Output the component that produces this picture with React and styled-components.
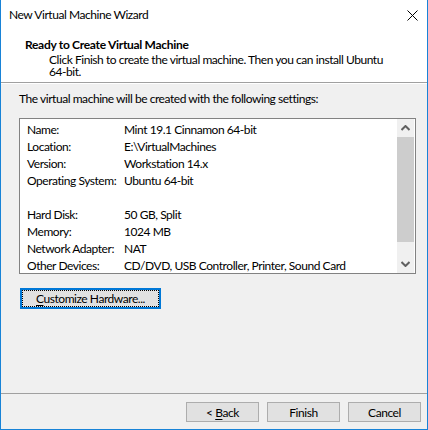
import React from "react";
import styled, { createGlobalStyle } from "styled-components";

const Global = createGlobalStyle`
  html, body { margin: 0; padding: 0; background: #ffffff; }
  body { font-family: Lato, "Noto Sans", sans-serif; font-size: 12px; letter-spacing: -0.45px; color: #000; }
  * { box-sizing: border-box; }
`;

const Window = styled.div`
  width: 428px;
  height: 430px;
  display: flex;
  flex-direction: column;
  border: 1px solid #1883d7;
  border-top: none;
  background: #f0f0f0;
  overflow: hidden;
`;

const TitleBar = styled.div`
  height: 30px;
  flex: none;
  display: flex;
  align-items: center;
  justify-content: space-between;
  background: #fff;
  padding-left: 8px;
  padding-right: 9px;
`;

const Title = styled.span`
  font-size: 12px;
  line-height: 30px;
  color: #000;
`;

const Header = styled.div`
  height: 53px;
  flex: none;
  background: #fff;
  padding: 7px 0 0 24px;
  border-bottom: 1px solid #a0a0a0;
`;

const Heading = styled.div`
  font-weight: 700;
  font-size: 12px;
  line-height: 15px;
  letter-spacing: -0.3px;
`;

const Subtitle = styled.div`
  margin-left: 24px;
  margin-top: 2px;
  font-size: 12px;
  line-height: 12px;
  width: 345px;
`;

const Body = styled.div`
  flex: 1;
  display: flex;
  flex-direction: column;
  padding: 7px 11px 0 18px;
  border-top: 1px solid #fff;
`;

const Intro = styled.div`
  line-height: 15px;
  margin-bottom: 12px;
`;

const ListBox = styled.div`
  height: 156px;
  display: flex;
  border: 1px solid #828282;
  background: #fff;
`;

const Rows = styled.div`
  flex: 1;
  padding: 2px 0 0 7px;
  overflow: hidden;
`;

const Row = styled.div`
  height: 17px;
  display: flex;
  align-items: center;
  white-space: nowrap;
`;

const Label = styled.span`
  width: 97px;
  flex: none;
`;

const Value = styled.span``;

const ScrollBar = styled.div`
  width: 17px;
  flex: none;
  display: flex;
  flex-direction: column;
  background: #f0f0f0;
  margin-right: 1px;
`;

const Arrow = styled.div`
  height: 18px;
  flex: none;
  display: flex;
  align-items: center;
  justify-content: center;
`;

const Track = styled.div`
  flex: 1;
  display: flex;
  flex-direction: column;
`;

const Thumb = styled.div`
  height: 105px;
  background: #cdcdcd;
`;

const CustomizeButton = styled.button`
  align-self: flex-start;
  margin-top: 14px;
  margin-left: 1px;
  width: 141px;
  height: 21px;
  padding: 0;
  font: inherit;
  letter-spacing: inherit;
  font-size: 12px;
  color: #000;
  background: #e1e1e1;
  border: 2px solid #0078d7;
  display: flex;
  align-items: stretch;
`;

const FocusRect = styled.span`
  flex: 1;
  display: flex;
  align-items: center;
  justify-content: center;
  border: 1px dotted #000;
  line-height: 13px;
`;

const Footer = styled.div`
  height: 36px;
  flex: none;
  border-top: 1px solid #a0a0a0;
  display: flex;
  justify-content: flex-end;
  gap: 8px;
  padding: 8px 6px 0 0;
`;

const Button = styled.button`
  width: 73px;
  height: 20px;
  padding: 0;
  font: inherit;
  letter-spacing: inherit;
  font-size: 12px;
  color: #000;
  background: #e1e1e1;
  border: 1px solid #adadad;
  display: flex;
  align-items: center;
  justify-content: center;
`;

const U = styled.span`
  text-decoration: underline;
  text-underline-offset: 2px;
`;

const rows = [
  ["Name:", "Mint 19.1 Cinnamon 64-bit"],
  ["Location:", "E:\\VirtualMachines"],
  ["Version:", "Workstation 14.x"],
  ["Operating System:", "Ubuntu 64-bit"],
  ["", ""],
  ["Hard Disk:", "50 GB, Split"],
  ["Memory:", "1024 MB"],
  ["Network Adapter:", "NAT"],
  ["Other Devices:", "CD/DVD, USB Controller, Printer, Sound Card"],
];

export default function App() {
  return (
    <>
      <Global />
      <Window>
        <TitleBar>
          <Title>New Virtual Machine Wizard</Title>
          <svg width="11" height="11" viewBox="0 0 11 11">
            <path d="M0.5 0.5 L10.5 10.5 M10.5 0.5 L0.5 10.5" stroke="#000" strokeWidth="1" />
          </svg>
        </TitleBar>
        <Header>
          <Heading>Ready to Create Virtual Machine</Heading>
          <Subtitle>
            Click Finish to create the virtual machine. Then you can install Ubuntu 64-bit.
          </Subtitle>
        </Header>
        <Body>
          <Intro>The virtual machine will be created with the following settings:</Intro>
          <ListBox>
            <Rows>
              {rows.map(([l, v], i) => (
                <Row key={i}>
                  <Label>{l}</Label>
                  <Value>{v}</Value>
                </Row>
              ))}
            </Rows>
            <ScrollBar>
              <Arrow>
                <svg width="9" height="6" viewBox="0 0 9 6">
                  <path d="M0.5 5 L4.5 1 L8.5 5" stroke="#606060" strokeWidth="2" fill="none" />
                </svg>
              </Arrow>
              <Track>
                <Thumb />
              </Track>
              <Arrow>
                <svg width="9" height="6" viewBox="0 0 9 6">
                  <path d="M0.5 1 L4.5 5 L8.5 1" stroke="#606060" strokeWidth="2" fill="none" />
                </svg>
              </Arrow>
            </ScrollBar>
          </ListBox>
          <CustomizeButton>
            <FocusRect>
              <span>
                <U>C</U>ustomize Hardware...
              </span>
            </FocusRect>
          </CustomizeButton>
        </Body>
        <Footer>
          <Button>
            <span>
              &lt; <U>B</U>ack
            </span>
          </Button>
          <Button>Finish</Button>
          <Button>Cancel</Button>
        </Footer>
      </Window>
    </>
  );
}
